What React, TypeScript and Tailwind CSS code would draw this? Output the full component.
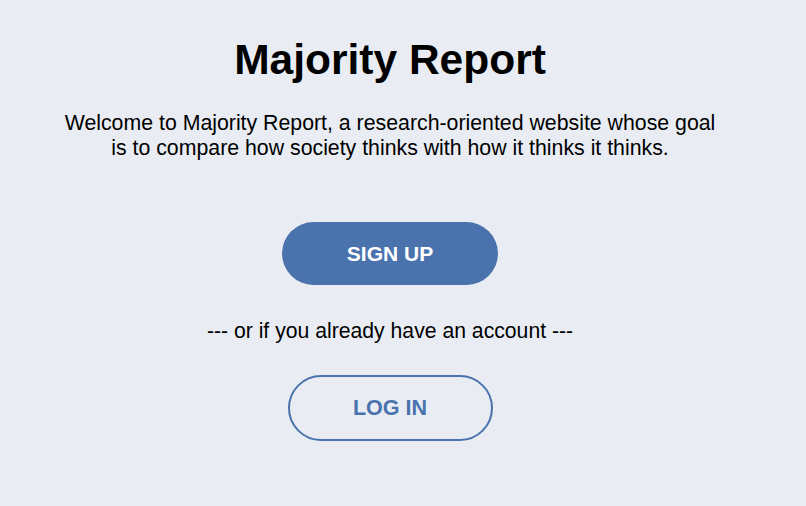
export default function App() {
  return (
    <div className="min-h-screen w-full bg-[#e9edf3] font-['Liberation_Sans',Arial,sans-serif] text-black">
      <div className="flex w-[780px] flex-col items-center pt-[36px]">
        <h1 className="text-[42.5px] font-bold leading-[48px]">Majority Report</h1>

        <p className="mt-[27px] max-w-[662px] text-center text-[21.3px] leading-[25px]">
          Welcome to Majority Report, a research-oriented website whose goal is to compare how
          society thinks with how it thinks it thinks.
        </p>

        <button className="mt-[61px] h-[63px] w-[216px] rounded-full bg-[#4a73ad] text-[21px] font-bold text-white">
          SIGN UP
        </button>

        <p className="mt-[33px] text-[21.2px] leading-[25px]">--- or if you already have an account ---</p>

        <button className="mt-[32px] h-[66px] w-[205px] rounded-full border-2 border-[#4a73ad] text-[21.5px] font-bold text-[#4a73ad]">
          LOG IN
        </button>
      </div>
    </div>
  )
}
